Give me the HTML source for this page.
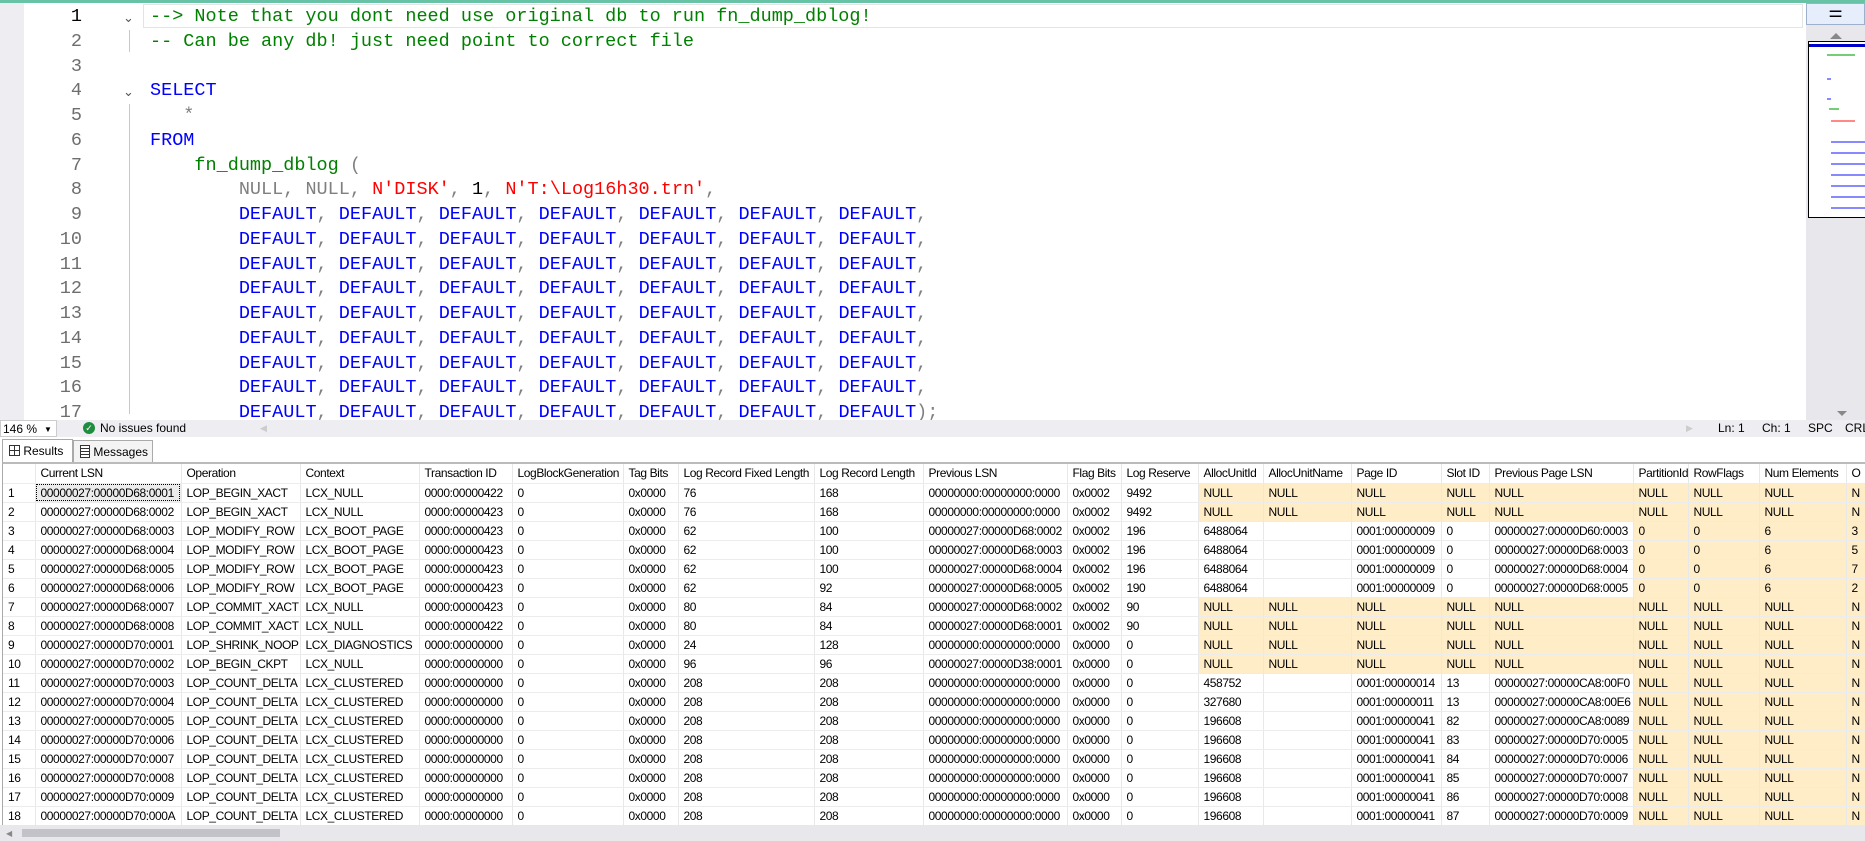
<!DOCTYPE html>
<html><head><meta charset="utf-8"><style>
*{margin:0;padding:0;box-sizing:border-box}
body{width:1865px;height:841px;overflow:hidden;background:#fff;position:relative;font-family:"Liberation Sans",sans-serif}
#top{position:absolute;left:0;top:0;width:1865px;height:3px;background:#68c2a5}
#gut{position:absolute;left:0;top:3px;width:24px;height:417px;background:#eeeef2}
#ed{position:absolute;left:0;top:5px;font-family:"Liberation Mono",monospace;font-size:18.5px;line-height:24.75px;white-space:pre}
.ln{position:absolute;left:30px;width:52px;text-align:right;color:#6e6e6e}
.cd{position:absolute;left:150px}
.c{color:#008000}.k{color:#0000ff}.g{color:#808080}.s{color:#ff0000}.f{color:#008000}
#cur{position:absolute;left:143px;top:4px;width:1660px;height:24px;border:1px solid #e4e4e4}
.fold{position:absolute;left:123px;color:#555;font-size:13px;font-family:"DejaVu Sans",sans-serif}
.guide{position:absolute;width:1px;background:#c8c8c8}
#vs{position:absolute;left:1806px;top:3px;width:59px;height:417px;background:#e8e8ec}
#split{position:absolute;left:1806px;top:3px;width:59px;height:22px;background:#e6edfb;border:1px solid #9db0cc;text-align:center;font-size:16px;line-height:18px}
#mm{position:absolute;left:1808px;top:41px;width:57px;height:177px;background:#fff;border:1px solid #000;border-right:none}
#status{position:absolute;left:0;top:420px;width:1865px;height:17px;background:#eeeef2;font-size:12px;line-height:17px;color:#000}
#zoom{position:absolute;left:0;top:0;width:57px;height:17px;background:#fff;border:1px solid #ccc;padding-left:2px}
#tabs{position:absolute;left:0;top:437px;width:1865px;height:26px;background:#fff}
.tab{position:absolute;top:3px;height:23px;border:1px solid #aaa;border-bottom:none;font-size:12px;line-height:22px;background:#f4f4f4;white-space:nowrap;overflow:hidden}
#grid{position:absolute;left:2px;top:462px;width:1863px;height:363px;border-top:2px solid #bbb;border-left:1px solid #aaa;overflow:hidden}
table{border-collapse:collapse;table-layout:fixed;width:1873px;font-size:12px;font-family:"Liberation Sans",sans-serif;letter-spacing:-0.4px}
td{height:19px;border-right:1px solid #e8e8e8;border-bottom:1px solid #ececec;padding-left:5px;white-space:nowrap;overflow:hidden;color:#000}
tr.h td{height:19px}
.y{background:#ffedc8}
#hs{position:absolute;left:0;top:825px;width:1865px;height:16px;background:#e8e8ec}
</style></head><body>
<div id="top"></div>
<div id="gut"></div>
<div id="cur"></div>
<div class="guide" style="left:129px;top:30px;height:22px"></div>
<div class="guide" style="left:129px;top:104px;height:310px"></div>
<div id="ed">
<div class="ln" style="top:0;color:#000">1</div><div class="ln" style="top:24.75px">2</div><div class="ln" style="top:49.5px">3</div><div class="ln" style="top:74.25px">4</div><div class="ln" style="top:99px">5</div><div class="ln" style="top:123.75px">6</div><div class="ln" style="top:148.5px">7</div><div class="ln" style="top:173.25px">8</div><div class="ln" style="top:198px">9</div><div class="ln" style="top:222.75px">10</div><div class="ln" style="top:247.5px">11</div><div class="ln" style="top:272.25px">12</div><div class="ln" style="top:297px">13</div><div class="ln" style="top:321.75px">14</div><div class="ln" style="top:346.5px">15</div><div class="ln" style="top:371.25px">16</div><div class="ln" style="top:396px">17</div>
<div class="fold" style="top:2px">&#8964;</div><div class="fold" style="top:76px">&#8964;</div>
<div class="cd" style="top:0"><span class="c">--&gt; Note that you dont need use original db to run fn_dump_dblog!</span></div>
<div class="cd" style="top:24.75px"><span class="c">-- Can be any db! just need point to correct file</span></div>
<div class="cd" style="top:74.25px"><span class="k">SELECT</span></div>
<div class="cd" style="top:99px"><span class="g">   *</span></div>
<div class="cd" style="top:123.75px"><span class="k">FROM</span></div>
<div class="cd" style="top:148.5px">    <span class="f">fn_dump_dblog</span> <span class="g">(</span></div>
<div class="cd" style="top:173.25px">        <span class="g">NULL, NULL,</span> <span class="s">N'DISK'</span><span class="g">,</span> 1<span class="g">,</span> <span class="s">N'T:\Log16h30.trn'</span><span class="g">,</span></div>
<div class="cd" style="top:198px">        <span class="k">DEFAULT</span><span class="g">,</span> <span class="k">DEFAULT</span><span class="g">,</span> <span class="k">DEFAULT</span><span class="g">,</span> <span class="k">DEFAULT</span><span class="g">,</span> <span class="k">DEFAULT</span><span class="g">,</span> <span class="k">DEFAULT</span><span class="g">,</span> <span class="k">DEFAULT</span><span class="g">,</span></div>
<div class="cd" style="top:222.75px">        <span class="k">DEFAULT</span><span class="g">,</span> <span class="k">DEFAULT</span><span class="g">,</span> <span class="k">DEFAULT</span><span class="g">,</span> <span class="k">DEFAULT</span><span class="g">,</span> <span class="k">DEFAULT</span><span class="g">,</span> <span class="k">DEFAULT</span><span class="g">,</span> <span class="k">DEFAULT</span><span class="g">,</span></div>
<div class="cd" style="top:247.5px">        <span class="k">DEFAULT</span><span class="g">,</span> <span class="k">DEFAULT</span><span class="g">,</span> <span class="k">DEFAULT</span><span class="g">,</span> <span class="k">DEFAULT</span><span class="g">,</span> <span class="k">DEFAULT</span><span class="g">,</span> <span class="k">DEFAULT</span><span class="g">,</span> <span class="k">DEFAULT</span><span class="g">,</span></div>
<div class="cd" style="top:272.25px">        <span class="k">DEFAULT</span><span class="g">,</span> <span class="k">DEFAULT</span><span class="g">,</span> <span class="k">DEFAULT</span><span class="g">,</span> <span class="k">DEFAULT</span><span class="g">,</span> <span class="k">DEFAULT</span><span class="g">,</span> <span class="k">DEFAULT</span><span class="g">,</span> <span class="k">DEFAULT</span><span class="g">,</span></div>
<div class="cd" style="top:297px">        <span class="k">DEFAULT</span><span class="g">,</span> <span class="k">DEFAULT</span><span class="g">,</span> <span class="k">DEFAULT</span><span class="g">,</span> <span class="k">DEFAULT</span><span class="g">,</span> <span class="k">DEFAULT</span><span class="g">,</span> <span class="k">DEFAULT</span><span class="g">,</span> <span class="k">DEFAULT</span><span class="g">,</span></div>
<div class="cd" style="top:321.75px">        <span class="k">DEFAULT</span><span class="g">,</span> <span class="k">DEFAULT</span><span class="g">,</span> <span class="k">DEFAULT</span><span class="g">,</span> <span class="k">DEFAULT</span><span class="g">,</span> <span class="k">DEFAULT</span><span class="g">,</span> <span class="k">DEFAULT</span><span class="g">,</span> <span class="k">DEFAULT</span><span class="g">,</span></div>
<div class="cd" style="top:346.5px">        <span class="k">DEFAULT</span><span class="g">,</span> <span class="k">DEFAULT</span><span class="g">,</span> <span class="k">DEFAULT</span><span class="g">,</span> <span class="k">DEFAULT</span><span class="g">,</span> <span class="k">DEFAULT</span><span class="g">,</span> <span class="k">DEFAULT</span><span class="g">,</span> <span class="k">DEFAULT</span><span class="g">,</span></div>
<div class="cd" style="top:371.25px">        <span class="k">DEFAULT</span><span class="g">,</span> <span class="k">DEFAULT</span><span class="g">,</span> <span class="k">DEFAULT</span><span class="g">,</span> <span class="k">DEFAULT</span><span class="g">,</span> <span class="k">DEFAULT</span><span class="g">,</span> <span class="k">DEFAULT</span><span class="g">,</span> <span class="k">DEFAULT</span><span class="g">,</span></div>
<div class="cd" style="top:396px">        <span class="k">DEFAULT</span><span class="g">,</span> <span class="k">DEFAULT</span><span class="g">,</span> <span class="k">DEFAULT</span><span class="g">,</span> <span class="k">DEFAULT</span><span class="g">,</span> <span class="k">DEFAULT</span><span class="g">,</span> <span class="k">DEFAULT</span><span class="g">,</span> <span class="k">DEFAULT</span><span class="g">);</span></div>
</div>
<div id="vs"><div style="position:absolute;left:24px;top:30px;width:0;height:0;border-left:6px solid transparent;border-right:6px solid transparent;border-bottom:6px solid #888"></div><div style="position:absolute;left:31px;top:408px;width:0;height:0;border-left:5px solid transparent;border-right:5px solid transparent;border-top:5px solid #888"></div></div>
<div id="split">&#9868;</div>
<div id="mm">
<div style="height:3px;background:#00c;margin-top:2px"></div>
<div style="position:absolute;left:18px;top:12px;width:28px;height:2px;background:#7c7"></div>
<div style="position:absolute;left:18px;top:36px;width:4px;height:2px;background:#88f"></div>
<div style="position:absolute;left:18px;top:56px;width:4px;height:2px;background:#88f"></div>
<div style="position:absolute;left:20px;top:66px;width:10px;height:2px;background:#7c7"></div>
<div style="position:absolute;left:22px;top:78px;width:24px;height:2px;background:#f88"></div>
<div style="position:absolute;left:22px;top:90px;width:34px;height:85px;background:repeating-linear-gradient(#fff 0 9px,#88f 9px 11px)"></div>
</div>
<div id="status">
<div id="zoom">146 % <span style="position:absolute;left:43px;font-size:8px">&#9660;</span></div>
<div style="position:absolute;left:83px;top:2px;width:12px;height:12px;border-radius:50%;background:#1e8e3e;color:#fff;font-size:9px;line-height:12px;text-align:center">&#10003;</div>
<div style="position:absolute;left:100px">No issues found</div>
<div style="position:absolute;left:260px;color:#ccc;font-size:9px">&#9664;</div>
<div style="position:absolute;left:1686px;color:#ccc;font-size:9px">&#9654;</div>
<div style="position:absolute;left:1718px">Ln: 1</div>
<div style="position:absolute;left:1762px">Ch: 1</div>
<div style="position:absolute;left:1808px">SPC</div>
<div style="position:absolute;left:1845px">CRL</div>
</div>
<div id="tabs">
<div class="tab" style="left:2px;width:71px;background:#fff;top:2px;height:24px;padding-left:6px"><span style="display:inline-block;width:11px;height:11px;border:1px solid #333;vertical-align:-1px;background:linear-gradient(90deg,transparent 4px,#333 4px 5px,transparent 5px),linear-gradient(transparent 4px,#333 4px 5px,transparent 5px)"></span> Results</div>
<div class="tab" style="left:73px;width:80px;padding-left:6px"><span style="display:inline-block;width:10px;height:13px;border:1px solid #333;vertical-align:-2px;background:repeating-linear-gradient(#fff 0 2px,#333 2px 3px)"></span> Messages</div>
</div>
<div id="grid">
<table>
<colgroup><col style="width:32px"><col style="width:146px"><col style="width:119px"><col style="width:119px"><col style="width:93px"><col style="width:111px"><col style="width:55px"><col style="width:136px"><col style="width:109px"><col style="width:144px"><col style="width:54px"><col style="width:77px"><col style="width:65px"><col style="width:88px"><col style="width:90px"><col style="width:48px"><col style="width:144px"><col style="width:55px"><col style="width:71px"><col style="width:87px"><col style="width:30px"></colgroup>
<tr class="h"><td></td><td>Current LSN</td><td>Operation</td><td>Context</td><td>Transaction ID</td><td>LogBlockGeneration</td><td>Tag Bits</td><td>Log Record Fixed Length</td><td>Log Record Length</td><td>Previous LSN</td><td>Flag Bits</td><td>Log Reserve</td><td>AllocUnitId</td><td>AllocUnitName</td><td>Page ID</td><td>Slot ID</td><td>Previous Page LSN</td><td>PartitionId</td><td>RowFlags</td><td>Num Elements</td><td>O</td></tr>
<tr><td>1</td><td style="background:#ececec;outline:1px dotted #000;outline-offset:-2px">00000027:00000D68:0001</td><td>LOP_BEGIN_XACT</td><td>LCX_NULL</td><td>0000:00000422</td><td>0</td><td>0x0000</td><td>76</td><td>168</td><td>00000000:00000000:0000</td><td>0x0002</td><td>9492</td><td class="y">NULL</td><td class="y">NULL</td><td class="y">NULL</td><td class="y">NULL</td><td class="y">NULL</td><td class="y">NULL</td><td class="y">NULL</td><td class="y">NULL</td><td class="y">N</td></tr>
<tr><td>2</td><td>00000027:00000D68:0002</td><td>LOP_BEGIN_XACT</td><td>LCX_NULL</td><td>0000:00000423</td><td>0</td><td>0x0000</td><td>76</td><td>168</td><td>00000000:00000000:0000</td><td>0x0002</td><td>9492</td><td class="y">NULL</td><td class="y">NULL</td><td class="y">NULL</td><td class="y">NULL</td><td class="y">NULL</td><td class="y">NULL</td><td class="y">NULL</td><td class="y">NULL</td><td class="y">N</td></tr>
<tr><td>3</td><td>00000027:00000D68:0003</td><td>LOP_MODIFY_ROW</td><td>LCX_BOOT_PAGE</td><td>0000:00000423</td><td>0</td><td>0x0000</td><td>62</td><td>100</td><td>00000027:00000D68:0002</td><td>0x0002</td><td>196</td><td>6488064</td><td></td><td>0001:00000009</td><td>0</td><td>00000027:00000D60:0003</td><td class="y">0</td><td class="y">0</td><td class="y">6</td><td class="y">3</td></tr>
<tr><td>4</td><td>00000027:00000D68:0004</td><td>LOP_MODIFY_ROW</td><td>LCX_BOOT_PAGE</td><td>0000:00000423</td><td>0</td><td>0x0000</td><td>62</td><td>100</td><td>00000027:00000D68:0003</td><td>0x0002</td><td>196</td><td>6488064</td><td></td><td>0001:00000009</td><td>0</td><td>00000027:00000D68:0003</td><td class="y">0</td><td class="y">0</td><td class="y">6</td><td class="y">5</td></tr>
<tr><td>5</td><td>00000027:00000D68:0005</td><td>LOP_MODIFY_ROW</td><td>LCX_BOOT_PAGE</td><td>0000:00000423</td><td>0</td><td>0x0000</td><td>62</td><td>100</td><td>00000027:00000D68:0004</td><td>0x0002</td><td>196</td><td>6488064</td><td></td><td>0001:00000009</td><td>0</td><td>00000027:00000D68:0004</td><td class="y">0</td><td class="y">0</td><td class="y">6</td><td class="y">7</td></tr>
<tr><td>6</td><td>00000027:00000D68:0006</td><td>LOP_MODIFY_ROW</td><td>LCX_BOOT_PAGE</td><td>0000:00000423</td><td>0</td><td>0x0000</td><td>62</td><td>92</td><td>00000027:00000D68:0005</td><td>0x0002</td><td>190</td><td>6488064</td><td></td><td>0001:00000009</td><td>0</td><td>00000027:00000D68:0005</td><td class="y">0</td><td class="y">0</td><td class="y">6</td><td class="y">2</td></tr>
<tr><td>7</td><td>00000027:00000D68:0007</td><td>LOP_COMMIT_XACT</td><td>LCX_NULL</td><td>0000:00000423</td><td>0</td><td>0x0000</td><td>80</td><td>84</td><td>00000027:00000D68:0002</td><td>0x0002</td><td>90</td><td class="y">NULL</td><td class="y">NULL</td><td class="y">NULL</td><td class="y">NULL</td><td class="y">NULL</td><td class="y">NULL</td><td class="y">NULL</td><td class="y">NULL</td><td class="y">N</td></tr>
<tr><td>8</td><td>00000027:00000D68:0008</td><td>LOP_COMMIT_XACT</td><td>LCX_NULL</td><td>0000:00000422</td><td>0</td><td>0x0000</td><td>80</td><td>84</td><td>00000027:00000D68:0001</td><td>0x0002</td><td>90</td><td class="y">NULL</td><td class="y">NULL</td><td class="y">NULL</td><td class="y">NULL</td><td class="y">NULL</td><td class="y">NULL</td><td class="y">NULL</td><td class="y">NULL</td><td class="y">N</td></tr>
<tr><td>9</td><td>00000027:00000D70:0001</td><td>LOP_SHRINK_NOOP</td><td>LCX_DIAGNOSTICS</td><td>0000:00000000</td><td>0</td><td>0x0000</td><td>24</td><td>128</td><td>00000000:00000000:0000</td><td>0x0000</td><td>0</td><td class="y">NULL</td><td class="y">NULL</td><td class="y">NULL</td><td class="y">NULL</td><td class="y">NULL</td><td class="y">NULL</td><td class="y">NULL</td><td class="y">NULL</td><td class="y">N</td></tr>
<tr><td>10</td><td>00000027:00000D70:0002</td><td>LOP_BEGIN_CKPT</td><td>LCX_NULL</td><td>0000:00000000</td><td>0</td><td>0x0000</td><td>96</td><td>96</td><td>00000027:00000D38:0001</td><td>0x0000</td><td>0</td><td class="y">NULL</td><td class="y">NULL</td><td class="y">NULL</td><td class="y">NULL</td><td class="y">NULL</td><td class="y">NULL</td><td class="y">NULL</td><td class="y">NULL</td><td class="y">N</td></tr>
<tr><td>11</td><td>00000027:00000D70:0003</td><td>LOP_COUNT_DELTA</td><td>LCX_CLUSTERED</td><td>0000:00000000</td><td>0</td><td>0x0000</td><td>208</td><td>208</td><td>00000000:00000000:0000</td><td>0x0000</td><td>0</td><td>458752</td><td></td><td>0001:00000014</td><td>13</td><td>00000027:00000CA8:00F0</td><td class="y">NULL</td><td class="y">NULL</td><td class="y">NULL</td><td class="y">N</td></tr>
<tr><td>12</td><td>00000027:00000D70:0004</td><td>LOP_COUNT_DELTA</td><td>LCX_CLUSTERED</td><td>0000:00000000</td><td>0</td><td>0x0000</td><td>208</td><td>208</td><td>00000000:00000000:0000</td><td>0x0000</td><td>0</td><td>327680</td><td></td><td>0001:00000011</td><td>13</td><td>00000027:00000CA8:00E6</td><td class="y">NULL</td><td class="y">NULL</td><td class="y">NULL</td><td class="y">N</td></tr>
<tr><td>13</td><td>00000027:00000D70:0005</td><td>LOP_COUNT_DELTA</td><td>LCX_CLUSTERED</td><td>0000:00000000</td><td>0</td><td>0x0000</td><td>208</td><td>208</td><td>00000000:00000000:0000</td><td>0x0000</td><td>0</td><td>196608</td><td></td><td>0001:00000041</td><td>82</td><td>00000027:00000CA8:0089</td><td class="y">NULL</td><td class="y">NULL</td><td class="y">NULL</td><td class="y">N</td></tr>
<tr><td>14</td><td>00000027:00000D70:0006</td><td>LOP_COUNT_DELTA</td><td>LCX_CLUSTERED</td><td>0000:00000000</td><td>0</td><td>0x0000</td><td>208</td><td>208</td><td>00000000:00000000:0000</td><td>0x0000</td><td>0</td><td>196608</td><td></td><td>0001:00000041</td><td>83</td><td>00000027:00000D70:0005</td><td class="y">NULL</td><td class="y">NULL</td><td class="y">NULL</td><td class="y">N</td></tr>
<tr><td>15</td><td>00000027:00000D70:0007</td><td>LOP_COUNT_DELTA</td><td>LCX_CLUSTERED</td><td>0000:00000000</td><td>0</td><td>0x0000</td><td>208</td><td>208</td><td>00000000:00000000:0000</td><td>0x0000</td><td>0</td><td>196608</td><td></td><td>0001:00000041</td><td>84</td><td>00000027:00000D70:0006</td><td class="y">NULL</td><td class="y">NULL</td><td class="y">NULL</td><td class="y">N</td></tr>
<tr><td>16</td><td>00000027:00000D70:0008</td><td>LOP_COUNT_DELTA</td><td>LCX_CLUSTERED</td><td>0000:00000000</td><td>0</td><td>0x0000</td><td>208</td><td>208</td><td>00000000:00000000:0000</td><td>0x0000</td><td>0</td><td>196608</td><td></td><td>0001:00000041</td><td>85</td><td>00000027:00000D70:0007</td><td class="y">NULL</td><td class="y">NULL</td><td class="y">NULL</td><td class="y">N</td></tr>
<tr><td>17</td><td>00000027:00000D70:0009</td><td>LOP_COUNT_DELTA</td><td>LCX_CLUSTERED</td><td>0000:00000000</td><td>0</td><td>0x0000</td><td>208</td><td>208</td><td>00000000:00000000:0000</td><td>0x0000</td><td>0</td><td>196608</td><td></td><td>0001:00000041</td><td>86</td><td>00000027:00000D70:0008</td><td class="y">NULL</td><td class="y">NULL</td><td class="y">NULL</td><td class="y">N</td></tr>
<tr><td>18</td><td>00000027:00000D70:000A</td><td>LOP_COUNT_DELTA</td><td>LCX_CLUSTERED</td><td>0000:00000000</td><td>0</td><td>0x0000</td><td>208</td><td>208</td><td>00000000:00000000:0000</td><td>0x0000</td><td>0</td><td>196608</td><td></td><td>0001:00000041</td><td>87</td><td>00000027:00000D70:0009</td><td class="y">NULL</td><td class="y">NULL</td><td class="y">NULL</td><td class="y">N</td></tr>
</table>
</div>
<div id="hs"><div style="position:absolute;left:6px;top:4px;color:#888;font-size:8px">&#9664;</div><div style="position:absolute;left:22px;top:4px;width:258px;height:8px;background:#c2c3c9"></div></div>
</body></html>
